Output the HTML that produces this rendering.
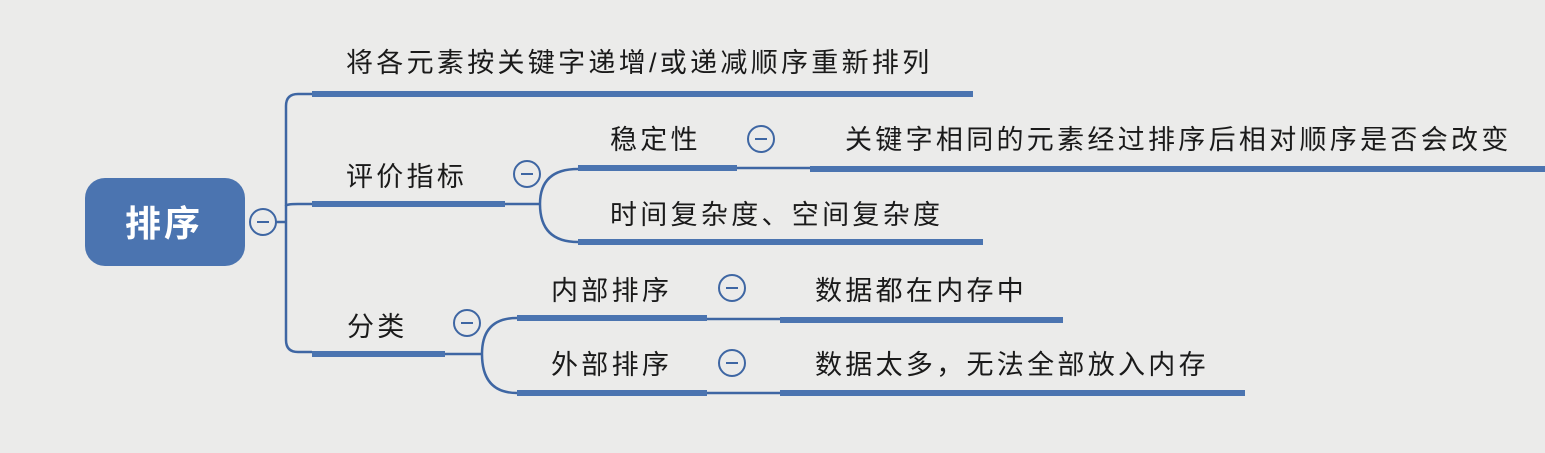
<!DOCTYPE html>
<html><head><meta charset="utf-8"><style>
html,body{margin:0;padding:0;background:#ebebea;}
svg{display:block}
text{font-family:"Liberation Sans","Noto Sans CJK SC",sans-serif;fill:#1a1a1a;font-size:27px;letter-spacing:3.3px;}
</style></head><body>
<svg width="1545" height="453" viewBox="0 0 1545 453">
<rect width="1545" height="453" fill="#ebebea"/>
<g fill="none" stroke="#3e66a3" stroke-width="2.5">
<path d="M276 222 H286"/>
<path d="M312 94 H298 Q286 94 286 106 V340 Q286 352 298 352 H312"/>
<path d="M286 206 Q286 204 298 204 H312"/>
<path d="M505 204 H540"/>
<path d="M578 169 Q540 169 540 204 Q540 242 578 242"/>
<path d="M737 168 H810"/>
<path d="M445 354 H482"/>
<path d="M517 318 Q482 318 482 354 Q482 393 517 393"/>
<path d="M707 319 H780"/>
<path d="M707 393 H780"/>
</g>
<g fill="#4b74b0">
<rect x="312" y="91" width="661" height="6"/>
<rect x="312" y="201" width="193" height="6"/>
<rect x="578" y="165" width="159" height="6"/>
<rect x="810" y="166" width="735" height="6"/>
<rect x="578" y="239" width="405" height="6"/>
<rect x="312" y="351" width="133" height="6"/>
<rect x="517" y="315" width="190" height="6"/>
<rect x="780" y="317" width="283" height="6"/>
<rect x="517" y="390" width="190" height="6"/>
<rect x="780" y="390" width="465" height="6"/>
<rect x="85" y="178" width="160" height="88" rx="20"/>
</g>
<text x="125" y="236" style="fill:#fff;font-size:36px;font-weight:bold;letter-spacing:3px">排序</text>
<g fill="none" stroke="#3e66a3" stroke-width="2">
<circle cx="263" cy="222" r="13"/>
<circle cx="527" cy="174" r="13"/>
<circle cx="761" cy="139" r="13"/>
<circle cx="467" cy="323" r="13"/>
<circle cx="732" cy="288" r="13"/>
<circle cx="732" cy="363" r="13"/>
</g>
<g stroke="#3e66a3" stroke-width="2">
<path d="M257 222h12M521 174h12M755 139h12M461 323h12M726 288h12M726 363h12"/>
</g>
<text x="346" y="72">将各元素按关键字递增/或递减顺序重新排列</text>
<text x="346" y="186">评价指标</text>
<text x="610" y="149">稳定性</text>
<text x="845" y="149">关键字相同的元素经过排序后相对顺序是否会改变</text>
<text x="610" y="224">时间复杂度、空间复杂度</text>
<text x="347" y="336">分类</text>
<text x="551" y="300">内部排序</text>
<text x="815" y="300">数据都在内存中</text>
<text x="551" y="374">外部排序</text>
<text x="815" y="374">数据太多，无法全部放入内存</text>
</svg>
</body></html>
